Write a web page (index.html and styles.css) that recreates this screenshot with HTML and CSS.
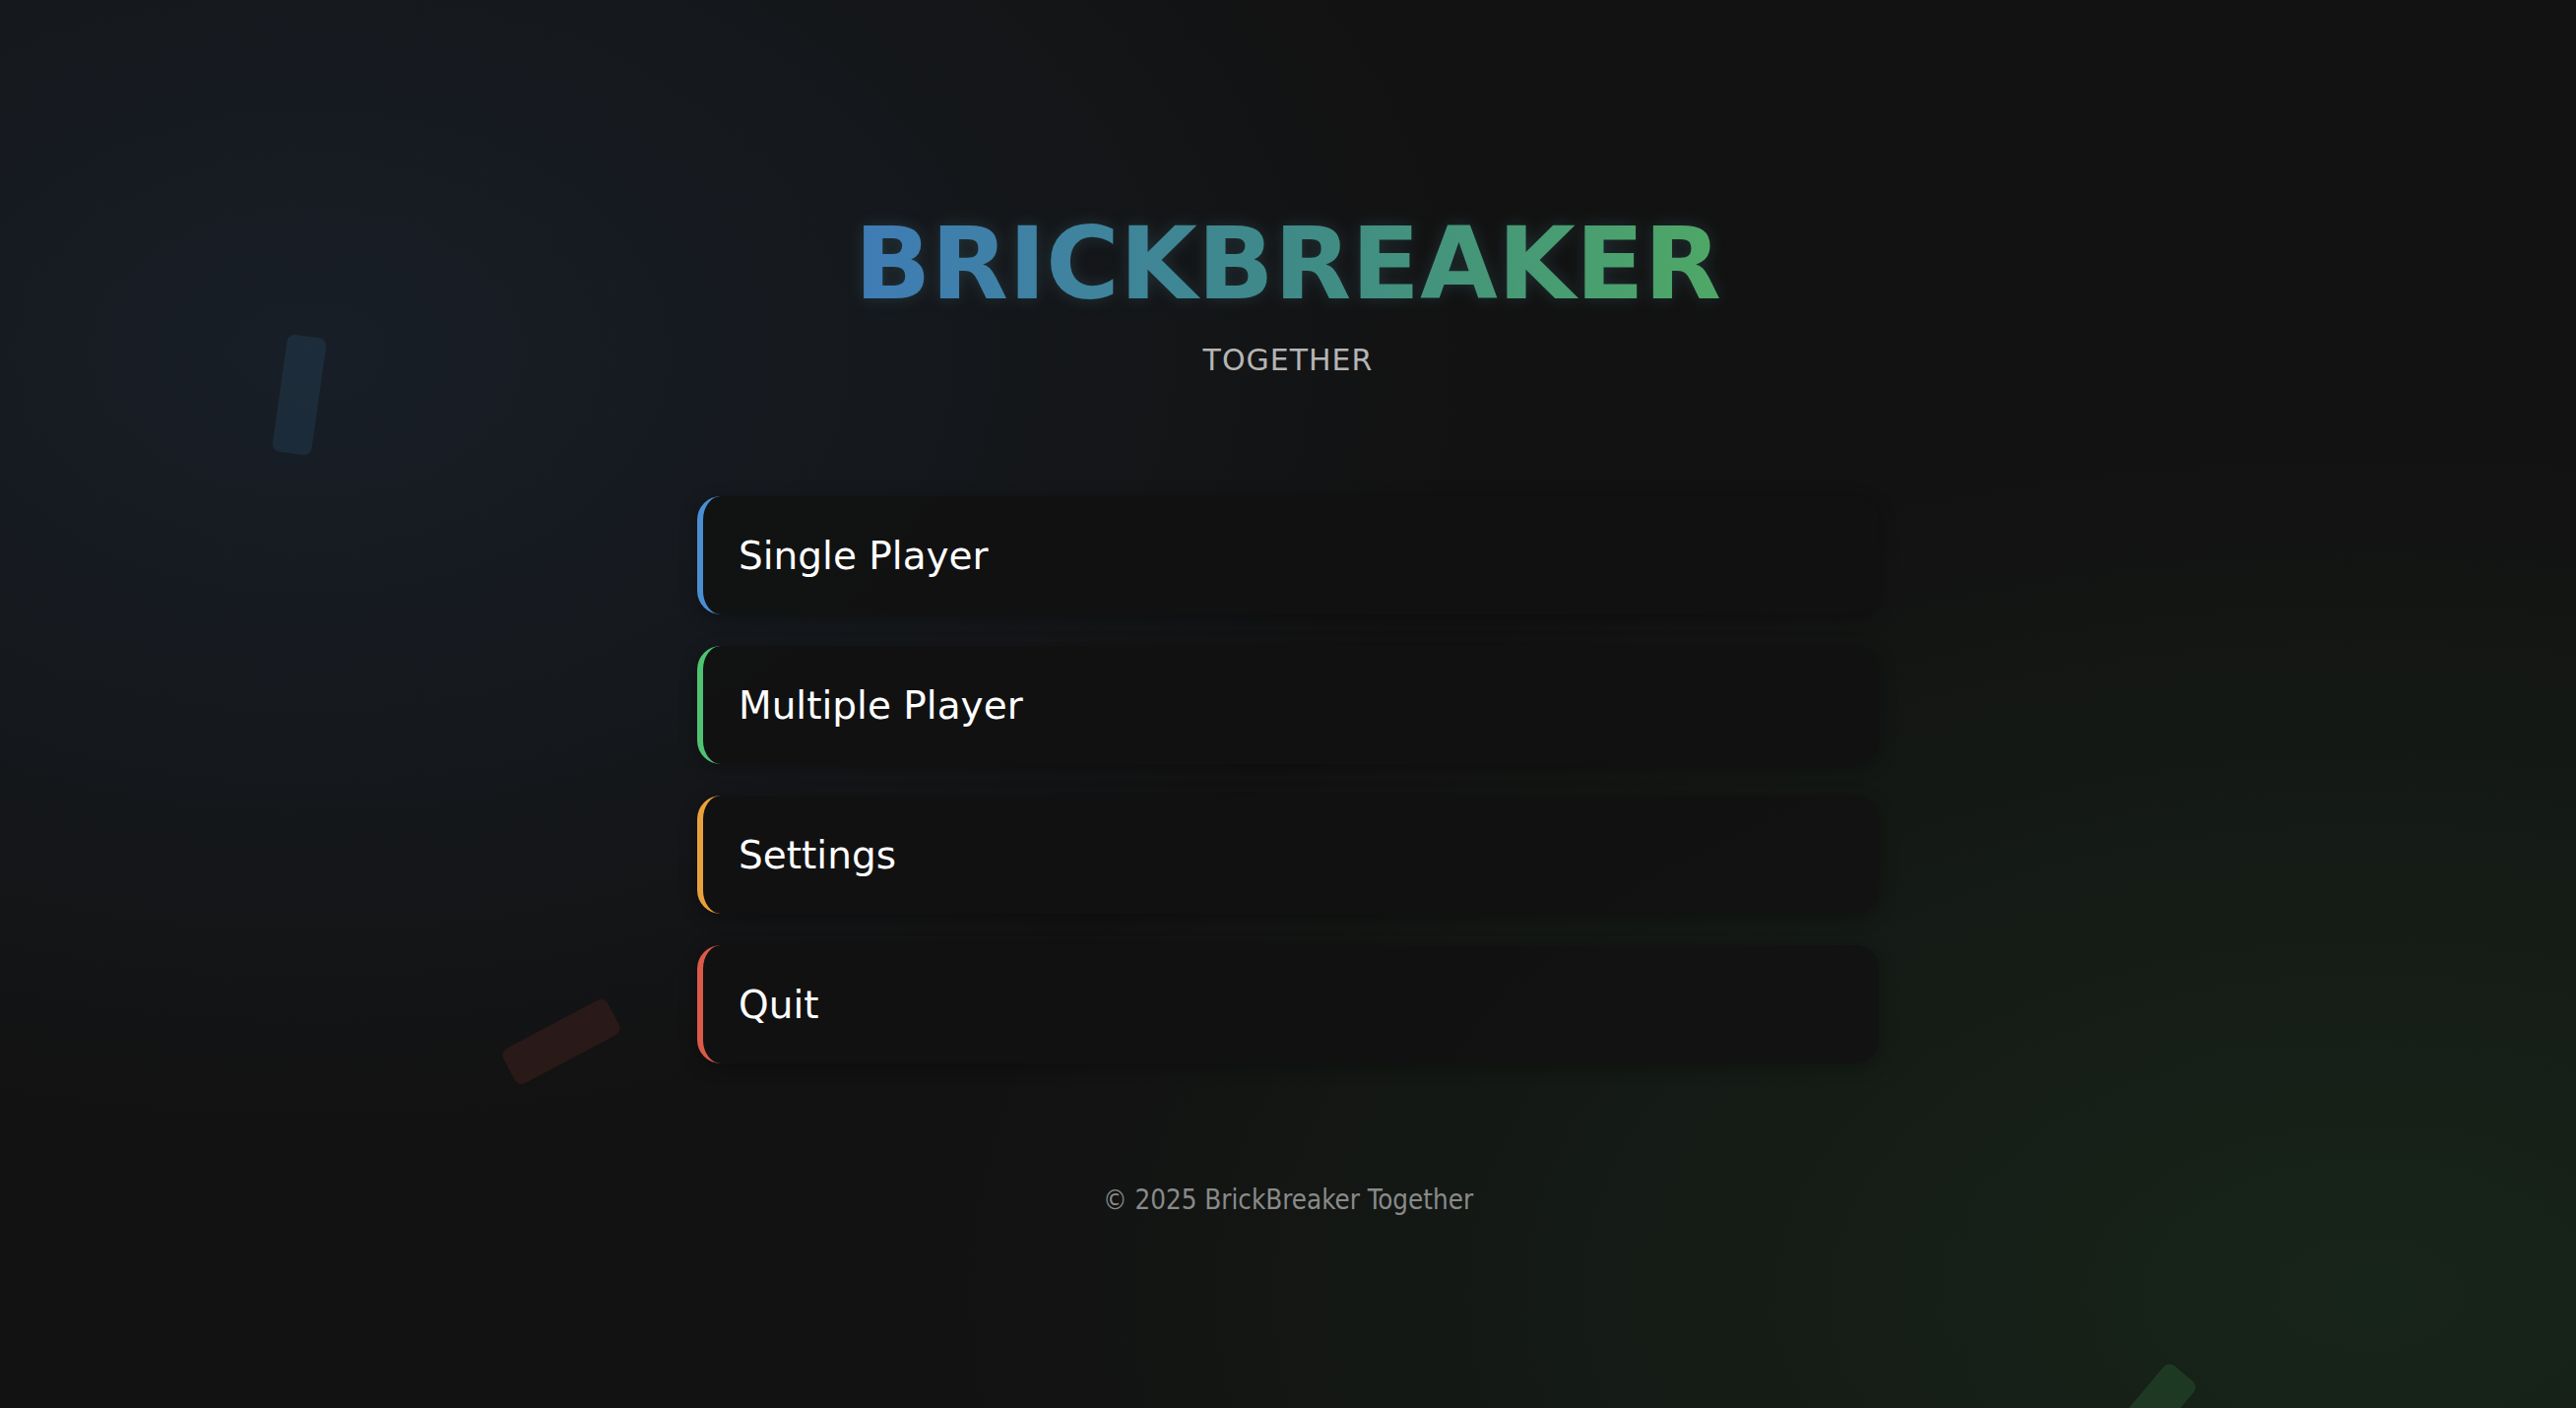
FILE: index.html
```html
<!DOCTYPE html>
<html lang="en">
<head>
<meta charset="utf-8">
<title>BrickBreaker Together</title>
<link rel="stylesheet" href="styles.css">
</head>
<body>
<div class="bricks">
  <div class="brick brick-blue"></div>
  <div class="brick brick-red"></div>
  <div class="brick brick-green"></div>
</div>
<main class="menu">
  <header class="brand">
    <h1 class="title">BRICKBREAKER</h1>
    <p class="subtitle">TOGETHER</p>
  </header>
  <nav class="buttons">
    <button class="menu-btn btn-blue">Single Player</button>
    <button class="menu-btn btn-green">Multiple Player</button>
    <button class="menu-btn btn-orange">Settings</button>
    <button class="menu-btn btn-red">Quit</button>
  </nav>
  <footer class="footer">© 2025 BrickBreaker Together</footer>
</main>
</body>
</html>
```
FILE: styles.css
```css
* { box-sizing: border-box; }
html, body { margin: 0; padding: 0; }
body {
  width: 100%;
  height: 100vh;
  overflow: hidden;
  font-family: "DejaVu Sans", Verdana, sans-serif;
  color: #fff;
  background:
    radial-gradient(ellipse 45% 55% at 12% 25%, rgba(45, 75, 115, 0.22) 0%, rgba(45, 75, 115, 0) 100%),
    radial-gradient(ellipse 55% 60% at 92% 92%, rgba(45, 110, 55, 0.2) 0%, rgba(45, 110, 55, 0) 100%),
    #121212;
  position: relative;
}
.bricks { position: absolute; inset: 0; pointer-events: none; }
.brick {
  position: absolute;
  width: 40px;
  height: 120px;
  border-radius: 8px;
}
.brick-blue {
  left: 284px; top: 341px;
  transform: rotate(8deg);
  background: rgba(40, 75, 100, 0.32);
}
.brick-red {
  left: 550px; top: 998px;
  transform: rotate(62deg);
  background: rgba(90, 40, 35, 0.32);
}
.brick-green {
  left: 2159px; top: 1381px;
  transform: rotate(40deg);
  background: rgba(50, 110, 60, 0.32);
}
.menu {
  position: relative;
  display: flex;
  flex-direction: column;
  align-items: center;
  padding-top: 217px;
}
.brand { text-align: center; }
.title {
  margin: 0;
  font-size: 102px;
  line-height: 1;
  font-weight: bold;
  letter-spacing: 0;
  background: linear-gradient(90deg, #3f7cb6 0%, #3f8a88 50%, #4ea865 100%);
  -webkit-background-clip: text;
  background-clip: text;
  color: transparent;
  filter: drop-shadow(0 0 8px rgba(80, 150, 170, 0.22));
}
.subtitle {
  margin: 32px 0 0;
  font-size: 30px;
  line-height: 1;
  letter-spacing: 1px;
  color: #b5b5b5;
}
.buttons {
  margin-top: 123px;
  width: 1200px;
  display: flex;
  flex-direction: column;
  gap: 32px;
}
.menu-btn {
  display: flex;
  align-items: center;
  height: 120px;
  width: 100%;
  padding: 0 0 0 36px;
  border: none;
  border-left: 6px solid #4a8fd4;
  border-radius: 24px;
  background: rgba(17, 17, 17, 0.88);
  box-shadow: 0 4px 18px rgba(0, 0, 0, 0.3);
  font-family: inherit;
  font-size: 39px;
  color: #fff;
  text-align: left;
  cursor: pointer;
}
.btn-blue { border-left-color: #4a8fd4; }
.btn-green { border-left-color: #4fc371; }
.btn-orange { border-left-color: #e9a23b; }
.btn-red { border-left-color: #db5a48; }
.footer {
  margin-top: 125px;
  font-family: "DejaVu Sans Condensed", "DejaVu Sans", sans-serif;
  font-stretch: condensed;
  font-size: 27.5px;
  line-height: 1;
  color: #8a8a8a;
}
```
